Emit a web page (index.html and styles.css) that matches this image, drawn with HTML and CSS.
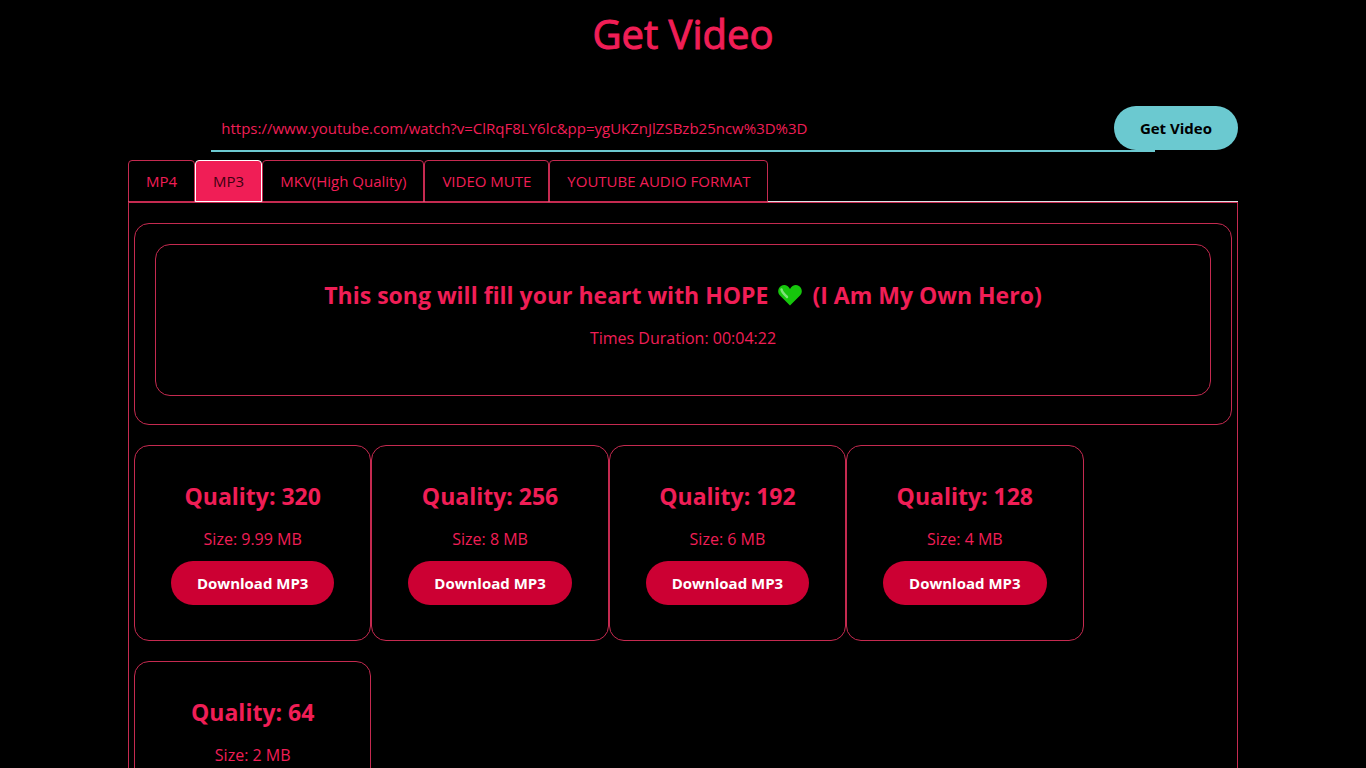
FILE: index.html
```
<!DOCTYPE html>
<html lang="en">
<head>
  <meta charset="UTF-8">
  <meta name="viewport" content="width=device-width, initial-scale=1">
  <title>Get Video</title>
  <link rel="stylesheet" href="styles.css">
</head>
<body>
  <div class="container">
    <h1>Get Video</h1>

    <form class="search" onsubmit="return false">
      <input type="text" class="search-input" aria-label="Video URL" value="https://www.youtube.com/watch?v=ClRqF8LY6lc&amp;pp=ygUKZnJlZSBzb25ncw%3D%3D">
      <button type="submit" class="btn btn-get">Get Video</button>
    </form>

    <nav class="tabs">
      <a class="tab" href="#mp4">MP4</a>
      <a class="tab active" href="#mp3">MP3</a>
      <a class="tab" href="#mkv">MKV(High Quality)</a>
      <a class="tab" href="#mute">VIDEO MUTE</a>
      <a class="tab" href="#audio">YOUTUBE AUDIO FORMAT</a>
    </nav>

    <div class="content" id="mp3">
      <div class="info">
        <div class="info-box">
          <h2>This song will fill your heart with HOPE
            <svg class="heart" viewBox="0 0 24 21" role="img" aria-label="green heart">
              <path fill="#16c60c" d="M12 20.500 L2 10.500 C-1 7.500 0 3 3 1 C6.500 -1 10 0.500 12 4 C14 0.500 17.500 -1 21 1 C24 3 25 7.500 22 10.500 Z"/>
              <path fill="none" stroke="#7fe07a" stroke-width="2.500" stroke-linecap="round" d="M3.500 4.500 C4 7.500 6.500 9.500 9 12"/>
            </svg>
            (I Am My Own Hero)</h2>
          <p>Times Duration: 00:04:22</p>
        </div>
      </div>

      <div class="cards">
        <div class="card">
          <h2>Quality: 320</h2>
          <p>Size: 9.99 MB</p>
          <button type="button" class="btn btn-download">Download MP3</button>
        </div>
        <div class="card">
          <h2>Quality: 256</h2>
          <p>Size: 8 MB</p>
          <button type="button" class="btn btn-download">Download MP3</button>
        </div>
        <div class="card">
          <h2>Quality: 192</h2>
          <p>Size: 6 MB</p>
          <button type="button" class="btn btn-download">Download MP3</button>
        </div>
        <div class="card">
          <h2>Quality: 128</h2>
          <p>Size: 4 MB</p>
          <button type="button" class="btn btn-download">Download MP3</button>
        </div>
        <div class="card">
          <h2>Quality: 64</h2>
          <p>Size: 2 MB</p>
          <button type="button" class="btn btn-download">Download MP3</button>
        </div>
      </div>
    </div>
  </div>
</body>
</html>
```
FILE: styles.css
```
* {
  box-sizing: border-box;
}

body {
  margin: 0;
  background: #000;
  color: #f01e56;
  font-family: "Segoe UI", "Open Sans", "Noto Sans", sans-serif;
  font-size: 16px;
  line-height: 24px;
}

.container {
  max-width: 1140px;
  margin: 0 auto;
  padding: 0 15px;
}

h1 {
  margin: 10px 0 48px;
  font-size: 40px;
  font-weight: 500;
  line-height: 48px;
  text-align: center;
  -webkit-text-stroke: 1px #f01e56;
}

.search {
  position: relative;
  margin-bottom: 8px;
}

.search-input {
  display: block;
  width: 85%;
  height: 46px;
  margin: 0 auto;
  padding: 0 10px;
  border: none;
  border-bottom: 2px solid #6bc9d0;
  outline: none;
  background: transparent;
  color: inherit;
  font-family: inherit;
  font-size: 15px;
}

.btn {
  height: 44px;
  padding: 0 26px;
  border: none;
  border-radius: 22px;
  font-family: inherit;
  font-size: 15px;
  font-weight: bold;
  cursor: pointer;
}

/* sits over the end of the input line */
.btn-get {
  position: absolute;
  top: 0;
  right: 0;
  background: #6bc9d0;
  color: #000;
}

.btn-download {
  background: #cc0033;
  color: #fff;
}

.tabs {
  display: flex;
  flex-wrap: wrap;
  border-bottom: 1px solid #dee2e6;
}

.tab {
  margin-bottom: -1px;
  padding: 8px 17px;
  border: 1px solid #c52a50;
  border-radius: 4px 4px 0 0;
  color: inherit;
  font-size: 15px;
  text-decoration: none;
}

.tab.active {
  border-color: #fff;
  background: #f01e56;
  color: #400010;
}

.content {
  padding: 20px 5px;
  border: 1px solid #c52a50;
}

.info,
.info-box,
.card {
  border: 1px solid #c52a50;
  border-radius: 15px;
}

.info {
  margin-bottom: 20px;
  padding: 20px 20px 28px;
}

.info-box,
.card {
  padding: 35px;
  text-align: center;
}

.info-box {
  min-height: 152px;
}

.cards {
  display: flex;
  flex-wrap: wrap;
  row-gap: 20px;
}

.card {
  width: 21.62%;
  padding: 35px 0;
}

h2 {
  margin: 0 0 16px;
  font-size: 23px;
  font-weight: bold;
  line-height: 30px;
}

p {
  margin: 0 0 10px;
}

.heart {
  width: 24px;
  height: 21px;
  margin: 0 4px;
  vertical-align: -2px;
}
```
